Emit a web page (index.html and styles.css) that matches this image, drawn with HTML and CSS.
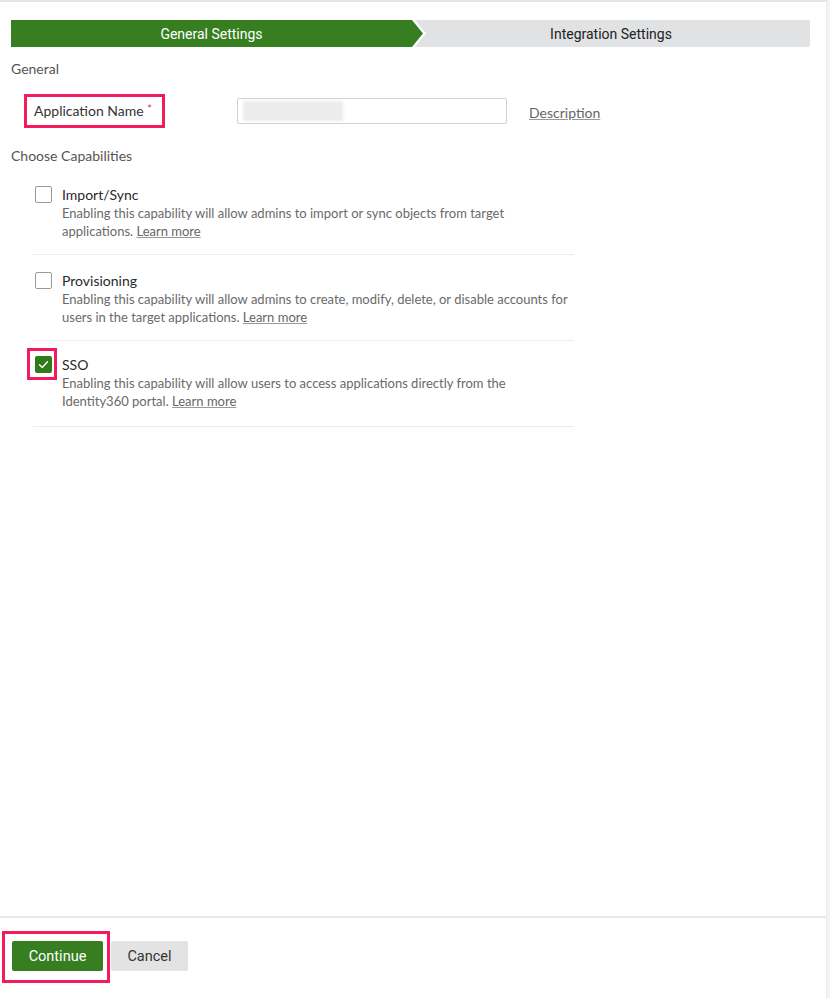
FILE: index.html
```html
<!DOCTYPE html>
<html lang="en">
<head>
    <meta charset="UTF-8">
    <meta name="viewport" content="width=device-width, initial-scale=1.0">
    <title>Add Application</title>
    <link rel="stylesheet" href="styles.css">
</head>
<body>
<div class="page">
    <div class="main">
        <!-- Pasos del asistente -->
        <div class="stepper">
            <div class="step-active">
                <div class="step-active-inner">General Settings</div>
            </div>
            <div class="step">Integration Settings</div>
        </div>

        <div class="section-title">General</div>

        <div class="name-row">
            <div class="name-label highlight">Application Name <span class="req">*</span></div>
            <div class="text-input"><span class="redacted"></span></div>
            <a class="link" href="#">Description</a>
        </div>

        <div class="section-title caps-title">Choose Capabilities</div>

        <div class="caps">
            <div class="cap">
                <span class="checkbox"></span>
                <div class="cap-body">
                    <div class="cap-name">Import/Sync</div>
                    <div class="cap-desc">Enabling this capability will allow admins to import or sync objects from target<br>applications. <a class="link" href="#">Learn more</a></div>
                </div>
            </div>
            <div class="cap">
                <span class="checkbox"></span>
                <div class="cap-body">
                    <div class="cap-name">Provisioning</div>
                    <div class="cap-desc">Enabling this capability will allow admins to create, modify, delete, or disable accounts for<br>users in the target applications. <a class="link" href="#">Learn more</a></div>
                </div>
            </div>
            <div class="cap">
                <span class="check-wrap">
                    <span class="checkbox checked">
                        <svg width="17" height="17" viewBox="0 0 17 17"><polyline points="4.5,8.8 7.3,11.4 12.5,5.8" fill="none" stroke="#fff" stroke-width="1.4" stroke-linecap="round" stroke-linejoin="round"/></svg>
                    </span>
                </span>
                <div class="cap-body">
                    <div class="cap-name">SSO</div>
                    <div class="cap-desc">Enabling this capability will allow users to access applications directly from the<br>Identity360 portal. <a class="link" href="#">Learn more</a></div>
                </div>
            </div>
        </div>
    </div>

    <!-- Botones -->
    <div class="footer">
        <div class="continue-wrap">
            <button class="btn btn-primary">Continue</button>
        </div>
        <button class="btn btn-secondary">Cancel</button>
    </div>
</div>
</body>
</html>
```

FILE: styles.css
```css
body {
    margin: 0;
    font-family: Lato, "Noto Sans", sans-serif;
    color: #333;
    background: #f4f4f4;
}
.page {
    width: 826px;
    min-height: 996px;
    background: #fff;
    border-top: 2px solid #e6e6e6;
    border-right: 1px solid #ececec;
    display: flex;
    flex-direction: column;
}
.main {
    flex: 1;
    padding: 18px 0 0 11px;
}

/* Pasos */
.stepper {
    display: flex;
    width: 799px;
    height: 27px;
    background: #e1e2e4;
    border-radius: 2px;
    font-family: Roboto, sans-serif;
    font-size: 14px;
}
.step-active {
    width: 415px;
    background: #fff;
    clip-path: polygon(0 0, calc(100% - 11px) 0, 100% 50%, calc(100% - 11px) 100%, 0 100%);
    border-radius: 2px 0 0 2px;
}
.step-active-inner {
    width: 412px;
    height: 27px;
    line-height: 29px;
    padding-right: 11px;
    box-sizing: border-box;
    background: #367e1f;
    color: #fff;
    text-align: center;
    clip-path: polygon(0 0, calc(100% - 11px) 0, 100% 50%, calc(100% - 11px) 100%, 0 100%);
}
.step {
    flex: 1;
    line-height: 29px;
    text-align: center;
    color: #222;
    padding-right: 14px;
}

.section-title {
    margin-top: 13px;
    font-size: 14px;
    line-height: 18px;
    color: #555;
}
.caps-title {
    margin-top: 19px;
}

/* Nombre de la aplicacion */
.name-row {
    display: flex;
    align-items: center;
    margin: 16px 0 0 13px;
}
.highlight {
    border: 3px solid #f31b5b;
}
.name-label {
    width: 141px;
    height: 34px;
    box-sizing: border-box;
    padding-left: 7px;
    line-height: 23px;
    font-size: 14px;
    color: #333;
}
.req {
    color: #e0304a;
    font-size: 11px;
    vertical-align: 3px;
}
.text-input {
    width: 270px;
    height: 26px;
    margin-left: 72px;
    box-sizing: border-box;
    border: 1px solid #d2d2d2;
    border-radius: 2px;
    padding: 2px 5px;
}
.redacted {
    display: block;
    width: 100px;
    height: 20px;
    background: #ececec;
    filter: blur(1.5px);
}
.link {
    color: #666;
    text-decoration: underline;
    text-decoration-color: #999;
}
.name-row .link {
    margin-left: 22px;
    margin-top: 3px;
    font-size: 14px;
}

/* Capacidades */
.caps {
    width: 541px;
    margin: 4px 0 0 22px;
}
.cap {
    display: flex;
    padding: 17px 0 14px 2px;
    border-bottom: 1px solid #ececec;
}
.cap:nth-child(3) {
    padding: 15px 0 16px 2px;
}
.checkbox {
    flex: none;
    display: block;
    width: 17px;
    height: 17px;
    box-sizing: border-box;
    border: 1px solid #9a9a9a;
    border-radius: 2px;
}
.checkbox.checked {
    border: none;
    background: #2f7b1c;
}
.checkbox svg {
    display: block;
}
.check-wrap {
    flex: none;
    align-self: flex-start;
    border: 3px solid #f31b5b;
    padding: 5px 2px 4px 5px;
    margin: -8px -5px -7px -8px;
}
.cap-body {
    margin-left: 10px;
}
.cap-name {
    font-size: 14px;
    line-height: 18px;
    color: #2a2a2a;
}
.cap-desc {
    font-size: 13px;
    line-height: 18px;
    color: #6a6a6a;
}

/* Pie */
.footer {
    display: flex;
    align-items: flex-start;
    border-top: 2px solid #e8e8e8;
    padding: 13px 0 15px 2px;
}
.continue-wrap {
    border: 3px solid #f31b5b;
    padding: 7px 4px 9px 7px;
}
.btn {
    height: 30px;
    border: none;
    border-radius: 2px;
    font-family: Roboto, sans-serif;
    font-size: 14.5px;
    cursor: pointer;
}
.btn-primary {
    width: 91px;
    background: #367e1f;
    color: #fff;
    display: block;
}
.btn-secondary {
    width: 77px;
    margin: 10px 0 0 1px;
    background: #e3e3e3;
    color: #333;
}
```
